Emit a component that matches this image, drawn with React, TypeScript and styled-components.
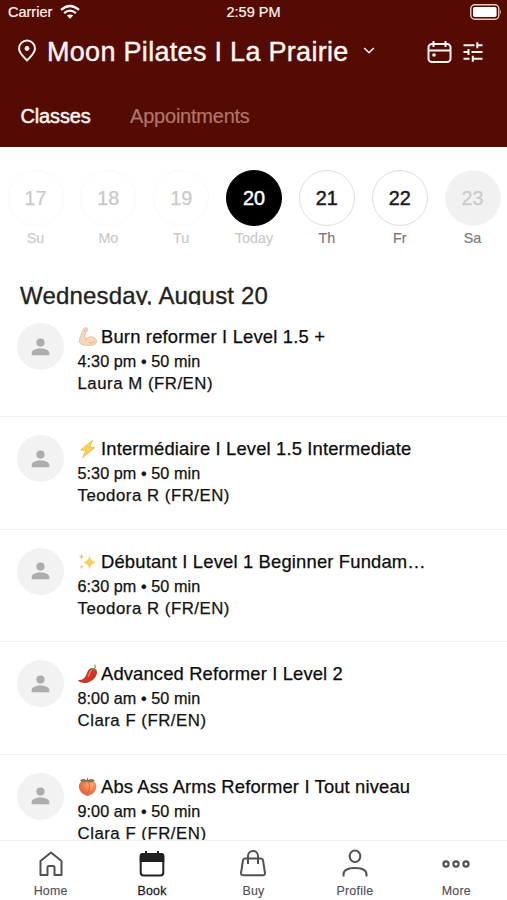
import React from "react";
import styled, { createGlobalStyle } from "styled-components";

const GlobalStyle = createGlobalStyle`
  * { box-sizing: border-box; }
  body { margin: 0; background: #fff; }
`;

const Screen = styled.div`
  width: 507px;
  height: 900px;
  overflow: hidden;
  display: flex;
  flex-direction: column;
  background: #fff;
  color: #111;
  font-family: "Liberation Sans", Arial, sans-serif;
  white-space: nowrap;
  svg { display: block; flex: none; overflow: visible; }
`;

const Header = styled.header`
  flex: none;
  height: 147px;
  background: #540b04;
  color: #fff5f1;
`;

const StatusBar = styled.div`
  height: 24px;
  padding: 0 5px 0 8px;
  display: grid;
  grid-template-columns: 1fr auto 1fr;
  align-items: center;
  font-size: 14.5px;
  line-height: 24px;
  -webkit-text-stroke: 0.2px currentColor;
`;

const Carrier = styled.div`
  display: flex;
  align-items: center;
  gap: 8px;
`;

const Clock = styled.span`
  margin-right: 3px;
`;

const Battery = styled.div`
  justify-self: end;
`;

const LocationBar = styled.div`
  height: 56px;
  padding: 0 24px 0 17px;
  display: flex;
  align-items: center;
`;

const PinSlot = styled.div`
  padding-bottom: 3px;
`;

const Studio = styled.h1`
  margin: 0 14px 0 10px;
  font-size: 27px;
  font-weight: 400;
  line-height: 56px;
  letter-spacing: 0.3px;
  -webkit-text-stroke: 0.4px currentColor;
`;

const ChevronSlot = styled.div`
  padding-bottom: 3px;
`;

const Actions = styled.div`
  margin-left: auto;
  display: flex;
  align-items: center;
  gap: 11px;
`;

const Tabs = styled.nav`
  display: flex;
  gap: 39.5px;
  padding: 24px 20.5px 0;
`;

const Tab = styled.span<{ $active?: boolean }>`
  font-size: 20px;
  line-height: 24px;
  letter-spacing: ${(p) => (p.$active ? "-0.15px" : "-0.23px")};
  color: ${(p) => (p.$active ? "#fff5f1" : "#b0756b")};
  -webkit-text-stroke: ${(p) => (p.$active ? "0.5px" : "0.2px")} currentColor;
`;

const Week = styled.div`
  flex: none;
  height: 135px;
  padding: 23px 0 0 7px;
  display: grid;
  grid-template-columns: repeat(7, 72.85px);
  margin-right: -20px;
`;

const Day = styled.div`
  width: 57px;
  display: flex;
  flex-direction: column;
  align-items: center;
`;

type DayKind = "past" | "today" | "open" | "closed";

const dayStyles: Record<DayKind, { bg: string; border: string; ink: string; label: string }> = {
  past: { bg: "#fff", border: "#fafafa", ink: "#c9c9c9", label: "#c9c9c9" },
  today: { bg: "#000", border: "#000", ink: "#fff", label: "#c9c9c9" },
  open: { bg: "#fff", border: "#dedede", ink: "#1b1b1b", label: "#777" },
  closed: { bg: "#f1f1f1", border: "#f6f6f6", ink: "#cbcbcb", label: "#777" },
};

const DayCircle = styled.div<{ $kind: DayKind }>`
  width: 56px;
  height: 56px;
  border-radius: 50%;
  border: 1px solid ${(p) => dayStyles[p.$kind].border};
  background: ${(p) => dayStyles[p.$kind].bg};
  color: ${(p) => dayStyles[p.$kind].ink};
  font-size: 19.8px;
  line-height: 55px;
  text-align: center;
  -webkit-text-stroke: ${(p) => (p.$kind === "today" || p.$kind === "open" ? "0.5px" : "0.25px")} currentColor;
`;

const DayLabel = styled.div<{ $kind: DayKind }>`
  margin-top: 4px;
  font-size: 14.3px;
  line-height: 17px;
  color: ${(p) => dayStyles[p.$kind].label};
  -webkit-text-stroke: 0.15px currentColor;
`;

const DateHeading = styled.h2`
  flex: none;
  margin: 0;
  height: 23px;
  padding-left: 20px;
  overflow: hidden;
  font-size: 24px;
  font-weight: 400;
  line-height: 28px;
  letter-spacing: 0.17px;
  color: #222;
  -webkit-text-stroke: 0.3px currentColor;
`;

const ClassList = styled.main`
  flex: 1;
  min-height: 0;
  overflow: hidden;
`;

const ClassRow = styled.article`
  height: 112.4px;
  border-bottom: 1px solid #f3f3f3;
  display: flex;
  gap: 13.5px;
  padding: 18px 0 0 17px;
`;

const Avatar = styled.div`
  flex: none;
  width: 47px;
  height: 47px;
  border-radius: 50%;
  background: #f2f2f2;
  display: grid;
  place-items: center;
`;

const ClassInfo = styled.div`
  padding-top: 2px;
`;

const ClassTitle = styled.div`
  display: flex;
  align-items: center;
  gap: 3.5px;
  height: 24px;
  font-size: 18.4px;
  line-height: 24px;
  color: #0c0c0c;
  -webkit-text-stroke: 0.25px currentColor;
`;

const TitleText = styled.span<{ $spacing: number }>`
  letter-spacing: ${(p) => p.$spacing}px;
`;

const ClassTime = styled.div`
  margin-top: 1px;
  font-size: 16.2px;
  line-height: 22px;
  letter-spacing: 0.06px;
  -webkit-text-stroke: 0.25px currentColor;
`;

const Instructor = styled.div`
  font-size: 16.8px;
  line-height: 23px;
  letter-spacing: 0.52px;
  -webkit-text-stroke: 0.25px currentColor;
`;

const BottomNav = styled.nav`
  flex: none;
  height: 60px;
  border-top: 1px solid #f0f0f0;
  background: #fff;
  display: grid;
  grid-template-columns: repeat(5, 1fr);
`;

const NavItem = styled.div<{ $active?: boolean }>`
  display: flex;
  flex-direction: column;
  align-items: center;
  padding-top: 9px;
  gap: 6px;
  font-size: 12.4px;
  line-height: 15px;
  letter-spacing: 0.25px;
  color: ${(p) => (p.$active ? "#1f2022" : "#505154")};
  -webkit-text-stroke: ${(p) => (p.$active ? "0.3px" : "0.15px")} currentColor;
`;

const WifiIcon = () => (
  <svg width="20" height="14" viewBox="0 0 20 14" fill="none" stroke="currentColor" strokeWidth="2.3">
    <path d="M1 4.9Q10-3 19 4.9M4.1 8.1Q10 3.1 15.9 8.1" />
    <path d="M10 13.7 6.8 10.6Q10 8.4 13.2 10.6Z" fill="currentColor" stroke="none" />
  </svg>
);

const BatteryIcon = () => (
  <svg width="32" height="16" viewBox="0 0 32 16">
    <rect x=".8" y=".8" width="28" height="14.4" rx="4" fill="none" stroke="#e9c9c3" strokeWidth="1.4" />
    <rect x="3" y="3" width="23.6" height="10" rx="1.8" fill="#fff" />
    <path d="M30.2 5.2q1.8 2.8 0 5.6z" fill="#e9c9c3" />
  </svg>
);

const PinIcon = () => (
  <svg width="20" height="23" viewBox="0 0 20 23" fill="none" stroke="currentColor" strokeWidth="2" strokeLinejoin="round">
    <path d="M10 21.5C7.2 18.4 2 14.2 2 9.500a8 8 0 0 1 16 0c0 4.700-5.200 8.900-8 12Z" />
    <circle cx="10" cy="9.500" r="2.400" fill="currentColor" stroke="none" />
  </svg>
);

const ChevronIcon = () => (
  <svg width="12" height="8" viewBox="0 0 12 8" fill="none" stroke="currentColor" strokeWidth="1.5">
    <path d="m1.200 1 4.800 4.800L10.800 1" />
  </svg>
);

const CalendarIcon = () => (
  <svg width="25" height="24" viewBox="0 0 25 24" fill="none" stroke="currentColor" strokeWidth="2">
    <rect x="1.500" y="4" width="22" height="18" rx="3.500" />
    <path d="M1.500 10.500h22M6.500 1v6M18.500 1v6" />
    <circle cx="7" cy="15" r="1.800" fill="currentColor" stroke="none" />
  </svg>
);

const FilterIcon = () => (
  <svg width="20" height="20" viewBox="0 0 20 20" fill="none" stroke="currentColor" strokeWidth="2">
    <path d="M.5 3.200h11M14 3.200h5.500M14.300.2v6M.5 10h5M5.500 7v6M8.500 10h11M.5 16.700h6M9.500 16.700h10M9.800 13.700v6" />
  </svg>
);

const PersonIcon = () => (
  <svg width="19" height="18" viewBox="0 0 19 18" fill="#adadad">
    <circle cx="9.500" cy="4.600" r="4.100" />
    <path d="M.7 17.300v-2.300C.7 12.200 5.200 10.500 9.500 10.500s8.800 1.700 8.800 4.500v2.300z" />
  </svg>
);

const Arm = () => (
  <svg width="20" height="20" viewBox="0 0 20 20">
    <path d="M5.800 1.400C7 .6 9.600.5 9.800 2.200 10 3.600 9.200 4.800 7.900 4.700l-.8 3.700c-.3 1.500.5 2.700 1.500 3.200 1.800-2.200 5.500-2.500 8-.8 2 1.400 2.700 3.600 2 5-1.700 2.500-6.700 3.200-11.300 2.500-2.700-.4-5-1.300-5.900-2.900C.9 11.100 4.100 5.300 5.800 1.400Z" fill="#f7d7b9" stroke="#dcb593" strokeWidth=".7" />
    <path d="M8.600 11.600c-.6.800-.8 1.500-.6 2.200M6.100 3.400l2 .8M11 15.500c2.100 1 4.800.2 6-1.500" fill="none" stroke="#d7a27c" strokeWidth=".8" />
  </svg>
);

const Bolt = () => (
  <svg width="20" height="20" viewBox="0 0 20 20">
    <path d="M14.700 1.200 2.600 11l5.200.2-3.300 7.600L16.900 8.600l-5.100-.4z" fill="#fad156" stroke="#e7ad37" strokeWidth=".7" strokeLinejoin="round" />
  </svg>
);

const Sparkles = () => (
  <svg width="20" height="20" viewBox="0 0 20 20">
    <path d="M11.500 3.200q.9 5.800 6.700 7.200-5.800 1.400-6.700 7.200-.9-5.800-6.300-7.200 5.400-1.400 6.300-7.200Z" fill="#f8d05c" />
    <path d="M3.500 1.800q.4 2.400 2.600 3-2.200.6-2.600 3-.4-2.400-2.600-3 2.200-.6 2.600-3Z" fill="#d7d479" />
    <path d="M3.600 12.200q.3 2.100 2.200 2.600-1.900.5-2.200 2.600-.3-2.100-2.200-2.600 1.900-.5 2.200-2.600Z" fill="#dcd58a" />
  </svg>
);

const Pepper = () => (
  <svg width="20" height="20" viewBox="0 0 20 20">
    <path d="M12.200 4.600c2.500-1.400 6.500 0 6.800 3.200.5 5-5.500 10.900-11.600 11.300-3.200.2-6.700-1-7.400-3 4.800.3 7-2.300 8.300-5.300 1.200-2.500 1.500-4.800 3.900-6.200Z" fill="#ce3525" />
    <path d="M13.300 6.500c-1.600 1-1.500 3.400-2.900 5.700" fill="none" stroke="#f38b72" strokeWidth="1.400" strokeLinecap="round" />
    <path d="M12.700 5.200c1.700-1.900 4.900-1.200 6.100 1.100-1.500-.8-2 .2-3 .1-1.100-.1-1.500-1.200-3.100-1.200Z" fill="#719346" />
    <path d="M16.200 5c1.100-1.200 1.300-2.600.6-4.300" fill="none" stroke="#829858" strokeWidth="1.300" />
  </svg>
);

const Peach = () => (
  <svg width="20" height="20" viewBox="0 0 20 20">
    <defs>
      <radialGradient id="peachSkin" cx=".65" cy=".3" r=".75">
        <stop offset="0" stopColor="#ffb078" />
        <stop offset=".55" stopColor="#f07847" />
        <stop offset="1" stopColor="#dd5a3b" />
      </radialGradient>
    </defs>
    <path d="M9.600 3.300C5 1.700.9 5 .9 9.800c0 4.300 4.400 8.300 8.900 9.200 4.700-1.100 8.500-4.900 8.500-9.400 0-4.700-4.200-8-8.700-6.300Z" fill="url(#peachSkin)" />
    <path d="M10 3.500c1.900 3.700 2.400 8.400-.3 12.200" fill="none" stroke="#cf573b" strokeWidth=".9" />
    <path d="M9.500 4.400C6.800 5.700 3.800 5.500 2 3.500 4.300 1.400 7.600 1.400 9.500 4.400Zm0 0c2.500 1.300 5.200 1 7.100-1-2.300-1.900-5.500-1.900-7.100 1Z" fill="#7f7848" />
    <path d="M9.500 4.400V1.200" stroke="#8a6740" strokeWidth="1.200" />
  </svg>
);

const HomeIcon = () => (
  <svg width="26" height="28" viewBox="0 0 26 28" fill="none" stroke="currentColor" strokeWidth="2" strokeLinejoin="round">
    <path d="M2.500 11 13 2.500 23.500 11v14h-7v-7.500q0-1.500-1.500-1.500h-4q-1.500 0-1.500 1.500V25h-7z" />
  </svg>
);

const BookIcon = () => (
  <svg width="26" height="28" viewBox="0 0 26 28" fill="none" stroke="currentColor" strokeWidth="2">
    <rect x="1.700" y="4" width="22.600" height="21.500" rx="3" />
    <path d="M1.700 11V6q0-2 2-2h18.600q2 0 2 2v5z" fill="currentColor" />
    <path d="M7 1v4M19 1v4" />
  </svg>
);

const BuyIcon = () => (
  <svg width="26" height="28" viewBox="0 0 26 28" fill="none" stroke="currentColor" strokeWidth="2">
    <path d="M5 8.500h16q1.700 0 2 1.700l1.900 12.300q.4 2.700-2.200 2.700H3.300q-2.600 0-2.200-2.700L3 10.200q.3-1.700 2-1.700Z" />
    <path d="M8 14V6a5 5 0 0 1 10 0v8" />
  </svg>
);

const ProfileIcon = () => (
  <svg width="26" height="28" viewBox="0 0 26 28" fill="none" stroke="currentColor" strokeWidth="2">
    <ellipse cx="13" cy="6.300" rx="5.300" ry="5.800" />
    <path d="M1.500 26.500v-2c0-4.500 4.500-6.500 11.500-6.500s11.500 2 11.500 6.500v2" />
  </svg>
);

const MoreIcon = () => (
  <svg width="28" height="28" viewBox="0 0 28 28" fill="none" stroke="currentColor" strokeWidth="2.200">
    <circle cx="4" cy="14" r="2.600" />
    <circle cx="14" cy="14" r="2.600" />
    <circle cx="24" cy="14" r="2.600" />
  </svg>
);

const days: { date: number; label: string; kind: DayKind }[] = [
  { date: 17, label: "Su", kind: "past" },
  { date: 18, label: "Mo", kind: "past" },
  { date: 19, label: "Tu", kind: "past" },
  { date: 20, label: "Today", kind: "today" },
  { date: 21, label: "Th", kind: "open" },
  { date: 22, label: "Fr", kind: "open" },
  { date: 23, label: "Sa", kind: "closed" },
];

const classes = [
  { icon: <Arm />, title: "Burn reformer I Level 1.5 +", time: "4:30 pm • 50 min", teacher: "Laura M (FR/EN)", spacing: 0.18 },
  { icon: <Bolt />, title: "Intermédiaire I Level 1.5 Intermediate", time: "5:30 pm • 50 min", teacher: "Teodora R (FR/EN)", spacing: 0.15 },
  { icon: <Sparkles />, title: "Débutant I Level 1 Beginner Fundam…", time: "6:30 pm • 50 min", teacher: "Teodora R (FR/EN)", spacing: 0.17 },
  { icon: <Pepper />, title: "Advanced Reformer I Level 2", time: "8:00 am • 50 min", teacher: "Clara F (FR/EN)", spacing: 0.14 },
  { icon: <Peach />, title: "Abs Ass Arms Reformer I Tout niveau", time: "9:00 am • 50 min", teacher: "Clara F (FR/EN)", spacing: 0.14 },
];

const navItems = [
  { label: "Home", icon: <HomeIcon /> },
  { label: "Book", icon: <BookIcon />, active: true },
  { label: "Buy", icon: <BuyIcon /> },
  { label: "Profile", icon: <ProfileIcon /> },
  { label: "More", icon: <MoreIcon /> },
];

export default function App() {
  return (
    <>
      <GlobalStyle />
      <Screen>
        <Header>
          <StatusBar>
            <Carrier>
              Carrier
              <WifiIcon />
            </Carrier>
            <Clock>2:59 PM</Clock>
            <Battery>
              <BatteryIcon />
            </Battery>
          </StatusBar>
          <LocationBar>
            <PinSlot>
              <PinIcon />
            </PinSlot>
            <Studio>Moon Pilates I La Prairie</Studio>
            <ChevronSlot>
              <ChevronIcon />
            </ChevronSlot>
            <Actions>
              <CalendarIcon />
              <FilterIcon />
            </Actions>
          </LocationBar>
          <Tabs>
            <Tab $active>Classes</Tab>
            <Tab>Appointments</Tab>
          </Tabs>
        </Header>
        <Week>
          {days.map((d) => (
            <Day key={d.date}>
              <DayCircle $kind={d.kind}>{d.date}</DayCircle>
              <DayLabel $kind={d.kind}>{d.label}</DayLabel>
            </Day>
          ))}
        </Week>
        <DateHeading>Wednesday, August 20</DateHeading>
        <ClassList>
          {classes.map((c) => (
            <ClassRow key={c.title}>
              <Avatar>
                <PersonIcon />
              </Avatar>
              <ClassInfo>
                <ClassTitle>
                  {c.icon}
                  <TitleText $spacing={c.spacing}>{c.title}</TitleText>
                </ClassTitle>
                <ClassTime>{c.time}</ClassTime>
                <Instructor>{c.teacher}</Instructor>
              </ClassInfo>
            </ClassRow>
          ))}
        </ClassList>
        <BottomNav>
          {navItems.map((n) => (
            <NavItem key={n.label} $active={n.active}>
              {n.icon}
              {n.label}
            </NavItem>
          ))}
        </BottomNav>
      </Screen>
    </>
  );
}
